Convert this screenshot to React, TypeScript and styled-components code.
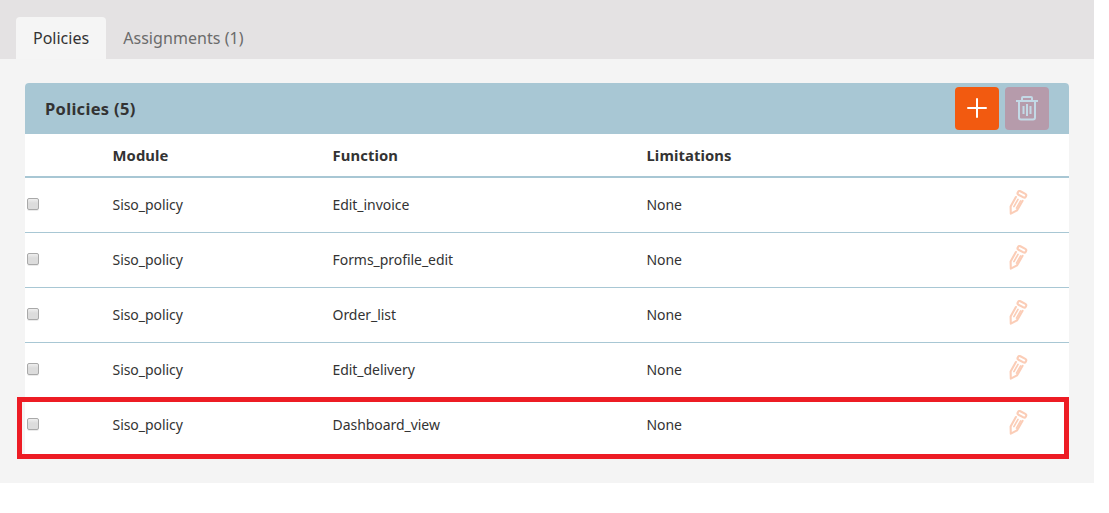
import React from 'react';
import styled, { createGlobalStyle } from 'styled-components';

const GlobalStyle = createGlobalStyle`
  *, *::before, *::after { box-sizing: border-box; }
  body {
    margin: 0;
    background: #fff;
    color: #333;
    font-family: "Noto Sans", "Open Sans", sans-serif;
    font-size: 14px;
  }
`;

const Page = styled.main`
  width: 1094px;
  height: 483px;
  background: #f4f4f4;
`;

const TabBar = styled.nav`
  display: flex;
  align-items: flex-end;
  height: 59px;
  padding-left: 16px;
  background: #e4e2e3;
`;

const Tab = styled.button<{ $active?: boolean }>`
  height: 42px;
  padding: 0 17px;
  border: 0;
  border-radius: 4px 4px 0 0;
  background: ${p => (p.$active ? '#f5f5f5' : 'transparent')};
  color: ${p => (p.$active ? '#333' : '#6b6b6b')};
  font: 400 16px/42px "Noto Sans", "Open Sans", sans-serif;
  letter-spacing: ${p => (p.$active ? '0' : '0.06px')};
  white-space: nowrap;
`;

const Panel = styled.section`
  position: relative;
  width: 1044px;
  height: 371px;
  margin: 24px 0 0 25px;
  border-radius: 4px 4px 0 0;
  background: #fff;
`;

const PanelHeader = styled.header`
  display: flex;
  align-items: center;
  justify-content: space-between;
  height: 51px;
  padding: 0 20px;
  border-radius: 4px 4px 0 0;
  background: #a8c7d4;
`;

const Title = styled.h1`
  margin: 0;
  font-size: 16.5px;
  font-weight: 700;
  line-height: 22px;
  letter-spacing: 0.3px;
`;

const Actions = styled.div`
  display: flex;
  gap: 6px;
`;

const ActionButton = styled.button<{ $muted?: boolean }>`
  display: grid;
  place-items: center;
  width: 44px;
  height: 43px;
  padding: 0;
  border: 0;
  border-radius: 4px;
  background: ${p => (p.$muted ? '#b69bab' : '#f25a10')};
  color: ${p => (p.$muted ? '#c3d9e6' : '#fff')};
`;

const Row = styled.div<{ $last?: boolean }>`
  display: grid;
  grid-template-columns: 87.5px 220px 314px 362px 1fr;
  align-items: center;
  height: ${p => (p.$last ? '54px' : '55px')};
  border-bottom: ${p => (p.$last ? '0' : '1px solid #a8c7d4')};
  line-height: 20px;
  letter-spacing: -0.05px;
`;

const HeadRow = styled(Row)`
  height: 44px;
  border-bottom: 2px solid #a8c7d4;
  font-size: 14.8px;
  font-weight: 700;
  letter-spacing: 0.1px;
`;

const Check = styled.input`
  appearance: none;
  width: 12px;
  height: 12px;
  margin: 0 0 2px 2px;
  border: 1px solid #a9a9a9;
  border-radius: 2px;
  background: linear-gradient(#eeeeee, #dcdcdc 40%);
  box-shadow: 0 1px 0 rgba(0, 0, 0, 0.08);
`;

const EditButton = styled.button`
  display: flex;
  height: 26px;
  width: 20px;
  margin: 0 0 4px 0;
  padding: 0;
  border: 0;
  background: none;
  color: #fbcdb7;
`;

const Highlight = styled.div`
  position: absolute;
  left: -8px;
  top: 314px;
  width: 1052px;
  height: 62px;
  border: 5px solid #ed1c24;
  pointer-events: none;
`;

const PlusIcon = () => (
  <svg width="20" height="21" viewBox="0 0 20 21" stroke="currentColor" strokeWidth="2" strokeLinecap="round">
    <path d="M10 1v18M1 10h18" />
  </svg>
);

const TrashIcon = () => (
  <svg width="22" height="25" viewBox="0 0 22 25" fill="none" stroke="currentColor" strokeWidth="2">
    <path d="M0 5h22M6 5V2a1 1 0 0 1 1-1h8a1 1 0 0 1 1 1v3M3 5v16.5a2 2 0 0 0 2 2h12a2 2 0 0 0 2-2V5" />
    <path d="M7.5 10v8M11 8v12M14.5 10v8" strokeWidth="2" />
  </svg>
);

const PencilIcon = () => (
  <svg width="20" height="26" viewBox="0 0 20 26" fill="none" stroke="currentColor" strokeWidth="2.1" strokeLinejoin="round" strokeLinecap="round">
    <rect x="8.4" y="2.3" width="9" height="4" rx="1.7" transform="rotate(28 12.9 4.3)" />
    <path d="M6.9 7L1.6 16.4L1.8 23.6L8 20.4L13.6 10.8" />
    <path d="M9 9.4L4.9 16.6M11.6 10.9L7.5 18.1" strokeWidth="1.7" />
  </svg>
);

const policies = [
  { module: 'Siso_policy', fn: 'Edit_invoice', limit: 'None' },
  { module: 'Siso_policy', fn: 'Forms_profile_edit', limit: 'None' },
  { module: 'Siso_policy', fn: 'Order_list', limit: 'None' },
  { module: 'Siso_policy', fn: 'Edit_delivery', limit: 'None' },
  { module: 'Siso_policy', fn: 'Dashboard_view', limit: 'None' },
];

export default function App() {
  return (
    <>
      <GlobalStyle />
      <Page>
        <TabBar>
          <Tab $active>Policies</Tab>
          <Tab>Assignments (1)</Tab>
        </TabBar>
        <Panel>
          <PanelHeader>
            <Title>Policies ({policies.length})</Title>
            <Actions>
              <ActionButton aria-label="Add policy"><PlusIcon /></ActionButton>
              <ActionButton $muted disabled aria-label="Delete policies"><TrashIcon /></ActionButton>
            </Actions>
          </PanelHeader>
          <HeadRow>
            <span />
            <span>Module</span>
            <span>Function</span>
            <span>Limitations</span>
            <span />
          </HeadRow>
          {policies.map((p, i) => (
            <Row key={p.fn} $last={i === policies.length - 1}>
              <Check type="checkbox" aria-label={p.fn} />
              <span>{p.module}</span>
              <span>{p.fn}</span>
              <span>{p.limit}</span>
              <EditButton aria-label={`Edit ${p.fn}`}><PencilIcon /></EditButton>
            </Row>
          ))}
          <Highlight />
        </Panel>
      </Page>
    </>
  );
}
